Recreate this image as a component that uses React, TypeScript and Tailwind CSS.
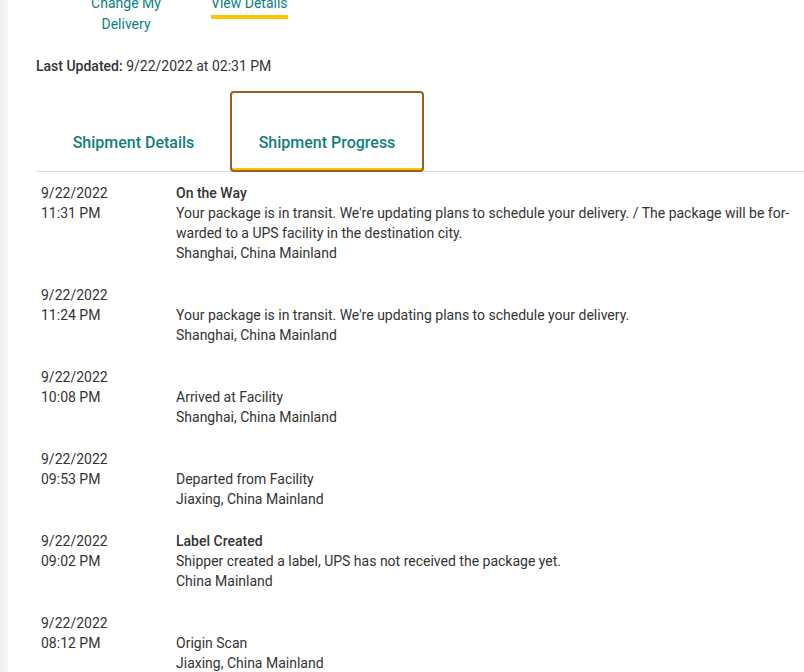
import React from "react";

type Activity = {
  date: string;
  time: string;
  status?: string;
  desc?: string;
  location: string;
};

const activities: Activity[] = [
  {
    date: "9/22/2022",
    time: "11:31 PM",
    status: "On the Way",
    desc:
      "Your package is in transit. We're updating plans to schedule your delivery. / The package will be for\u00ADwarded to a UPS facility in the destination city.",
    location: "Shanghai, China Mainland",
  },
  {
    date: "9/22/2022",
    time: "11:24 PM",
    desc: "Your package is in transit. We're updating plans to schedule your delivery.",
    location: "Shanghai, China Mainland",
  },
  { date: "9/22/2022", time: "10:08 PM", desc: "Arrived at Facility", location: "Shanghai, China Mainland" },
  { date: "9/22/2022", time: "09:53 PM", desc: "Departed from Facility", location: "Jiaxing, China Mainland" },
  {
    date: "9/22/2022",
    time: "09:02 PM",
    status: "Label Created",
    desc: "Shipper created a label, UPS has not received the package yet.",
    location: "China Mainland",
  },
  { date: "9/22/2022", time: "08:12 PM", desc: "Origin Scan", location: "Jiaxing, China Mainland" },
];

export default function App() {
  return (
    <div
      className="h-[672px] overflow-hidden bg-white text-[#333] flex"
      style={{ fontFamily: "Roboto, 'Liberation Sans', sans-serif" }}
    >
      <div className="w-2 shrink-0 bg-gradient-to-r from-[#ececec] to-[#f7f7f7]" />
      <main className="flex-1 pl-7">
        {/* top links, scrolled partly off screen */}
        <div className="flex -mt-[7px] text-[14px] leading-[21px] text-[#0a8080]">
          <div className="w-[120px] ml-[30px] text-center">
            Change My
            <br />
            Delivery
          </div>
          <div className="ml-[25px] flex flex-col items-start">
            <span>View Details</span>
            <span className="mt-[1px] h-1 w-[77px] bg-[#ffc400]" />
          </div>
        </div>

        <p className="mt-[21px] text-[14px] leading-5">
          <span className="font-medium">Last Updated:</span> 9/22/2022 at 02:31 PM
        </p>

        <div className="mt-[16px] flex border-b border-[#dcdcdc]">
          <button className="w-[195px] h-[79px] flex items-end justify-center pb-[16px] text-[16px] font-medium text-[#0f7f7c]">
            Shipment Details
          </button>
          <button className="w-[192px] h-[79px] flex items-end justify-center pb-[13px] text-[16px] font-medium text-[#0f7f7c] rounded-[3px] outline-2 outline-[#9b5f1d] -outline-offset-1 border-b-[3px] border-[#ffc400]">
            Shipment Progress
          </button>
        </div>

        <div className="pt-[11px] text-[14px] leading-5">
          {activities.map((a, i) => (
            <div key={i} className="flex pb-[22px]">
              <div className="w-[140px] shrink-0 pl-[5px]">
                <div>{a.date}</div>
                <div>{a.time}</div>
              </div>
              <div className="flex-1 pr-2">
                <div className="font-medium h-5">{a.status}</div>
                <div>{a.desc}</div>
                <div>{a.location}</div>
              </div>
            </div>
          ))}
        </div>
      </main>
    </div>
  );
}
